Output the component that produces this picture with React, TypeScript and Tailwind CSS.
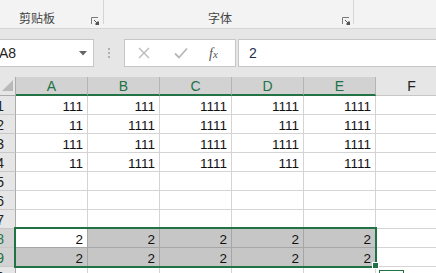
import React from "react";

const cols = ["A", "B", "C", "D", "E", "F"];

const data: Record<number, string[]> = {
  1: ["111", "111", "1111", "1111", "1111", ""],
  2: ["11", "1111", "1111", "111", "1111", ""],
  3: ["111", "111", "1111", "1111", "1111", ""],
  4: ["11", "1111", "1111", "111", "1111", ""],
  8: ["2", "2", "2", "2", "2", ""],
  9: ["2", "2", "2", "2", "2", ""],
};

const Launcher = () => (
  <svg width="8" height="8" viewBox="0 0 8 8" className="block">
    <path d="M0.5 7V0.5H7" stroke="#7a7a7a" fill="none" />
    <path d="M3 3L7 7M7 4V7H4" stroke="#555" fill="none" />
    <rect x="5" y="5" width="3" height="3" fill="#555" />
  </svg>
);

const App = () => {
  const rows = [1, 2, 3, 4, 5, 6, 7, 8, 9, 10];

  return (
    <div className="relative w-[436px] h-[273px] overflow-hidden bg-white font-['Liberation_Sans',sans-serif]">
      {/* ribbon */}
      <div className="flex h-[29px] bg-[#f3f3f3] border-b border-[#d5d5d5]">
        <div className="relative w-[103px] flex items-start pt-[10px] pl-[19px]">
          <span className="text-[12px] leading-[16px] text-[#444] font-['Noto_Sans_CJK_SC',sans-serif]">剪贴板</span>
          <div className="absolute left-[91px] top-[17px]">
            <Launcher />
          </div>
        </div>
        <div className="w-px h-[24px] bg-[#d5d5d5]" />
        <div className="relative w-[249px] flex items-start pt-[10px] pl-[104px]">
          <span className="text-[12px] leading-[16px] text-[#444] font-['Noto_Sans_CJK_SC',sans-serif]">字体</span>
          <div className="absolute left-[238px] top-[17px]">
            <Launcher />
          </div>
        </div>
        <div className="w-px h-[24px] bg-[#d5d5d5]" />
      </div>

      {/* formula bar */}
      <div className="flex items-start h-[48px] pt-[10px] bg-[#e6e6e6]">
        <div className="flex items-center justify-between w-[94px] h-[28px] bg-white border border-l-0 border-[#c6c6c6] pr-[6px]">
          <span className="text-[14px] text-[#222] -ml-[1px]">A8</span>
          <svg width="8" height="5" viewBox="0 0 8 5">
            <path d="M0 0H8L4 4.5Z" fill="#666" />
          </svg>
        </div>
        <div className="flex flex-col items-center justify-center gap-[2px] w-[30px] h-[28px]">
          <span className="w-[2px] h-[2px] bg-[#b0b0b0]" />
          <span className="w-[2px] h-[2px] bg-[#b0b0b0]" />
          <span className="w-[2px] h-[2px] bg-[#b0b0b0]" />
        </div>
        <div className="flex items-center w-[112px] h-[28px] bg-white border border-[#c6c6c6]">
          <svg width="12" height="12" viewBox="0 0 12 12" className="ml-[13px]">
            <path d="M1 1L11 11M11 1L1 11" stroke="#b8b8b8" strokeWidth="1.3" />
          </svg>
          <svg width="14" height="12" viewBox="0 0 14 12" className="ml-[24px]">
            <path d="M1 6.5L5 10.5L13 1.5" stroke="#b8b8b8" strokeWidth="1.8" fill="none" />
          </svg>
          <span className="ml-[21px] text-[#555] text-[14px] italic font-['Liberation_Serif',serif]">
            f<span className="text-[11px]">x</span>
          </span>
        </div>
        <div className="flex items-center flex-1 h-[28px] ml-[2px] bg-white border border-r-0 border-[#c6c6c6] pl-[10px]">
          <span className="text-[14px] text-[#1f2f4f]">2</span>
        </div>
      </div>

      {/* sheet */}
      <div className="grid grid-cols-[16px_repeat(6,72px)] auto-rows-[19px]">
        <div className="relative bg-[#e6e6e6] border-r border-b border-[#ababab]">
          <svg width="11" height="11" viewBox="0 0 11 11" className="absolute left-[2px] top-[3px]">
            <path d="M11 0V11H0Z" fill="#b9b9b9" />
          </svg>
        </div>
        {cols.map((c, i) =>
          i < 5 ? (
            <div
              key={c}
              className="flex items-end justify-center bg-[#d2d2d2] border-r border-b-2 border-r-[#b4b4b4] border-b-[#217346] text-[14px] leading-[16px] text-[#217346]"
            >
              {c}
            </div>
          ) : (
            <div
              key={c}
              className="flex items-end justify-center bg-[#e6e6e6] border-r border-b border-[#c6c6c6] pb-[1px] text-[14px] leading-[16px] text-[#222]"
            >
              {c}
            </div>
          )
        )}
        {rows.map((r) => {
          const sel = r === 8 || r === 9;
          const vals = data[r] || ["", "", "", "", "", ""];
          return (
            <React.Fragment key={r}>
              <div
                className={`flex items-end justify-end overflow-hidden pr-[11px] border-r border-b border-r-[#ababab] border-b-[#c8c8c8] text-[14px] leading-[16px] ${
                  sel ? "bg-[#d2d2d2] text-[#217346]" : "bg-[#e6e6e6] text-[#222]"
                }`}
              >
                {r}
              </div>
              {vals.map((v, i) => {
                const inSel = sel && i < 5;
                const active = r === 8 && i === 0;
                return (
                  <div
                    key={i}
                    className={`flex items-end justify-end pr-[4px] border-r border-b text-[13.5px] leading-[14px] text-[#111] ${
                      inSel
                        ? active
                          ? "bg-white border-[#a6a6a6]"
                          : "bg-[#c6c6c6] border-[#a6a6a6]"
                        : "bg-white border-[#d4d4d4]"
                    }`}
                  >
                    {v}
                  </div>
                );
              })}
            </React.Fragment>
          );
        })}
      </div>

      {/* selection overlay */}
      <div className="absolute left-[14px] top-[227px] w-[363px] h-[41px] border-2 border-[#217346]" />
      <div className="absolute left-[372px] top-[262px] w-[7px] h-[7px] bg-[#217346] border border-white" />
      <div className="absolute left-[379px] top-[270px] w-[25px] h-[10px] bg-white border border-[#217346]" />
    </div>
  );
};

export default App;
